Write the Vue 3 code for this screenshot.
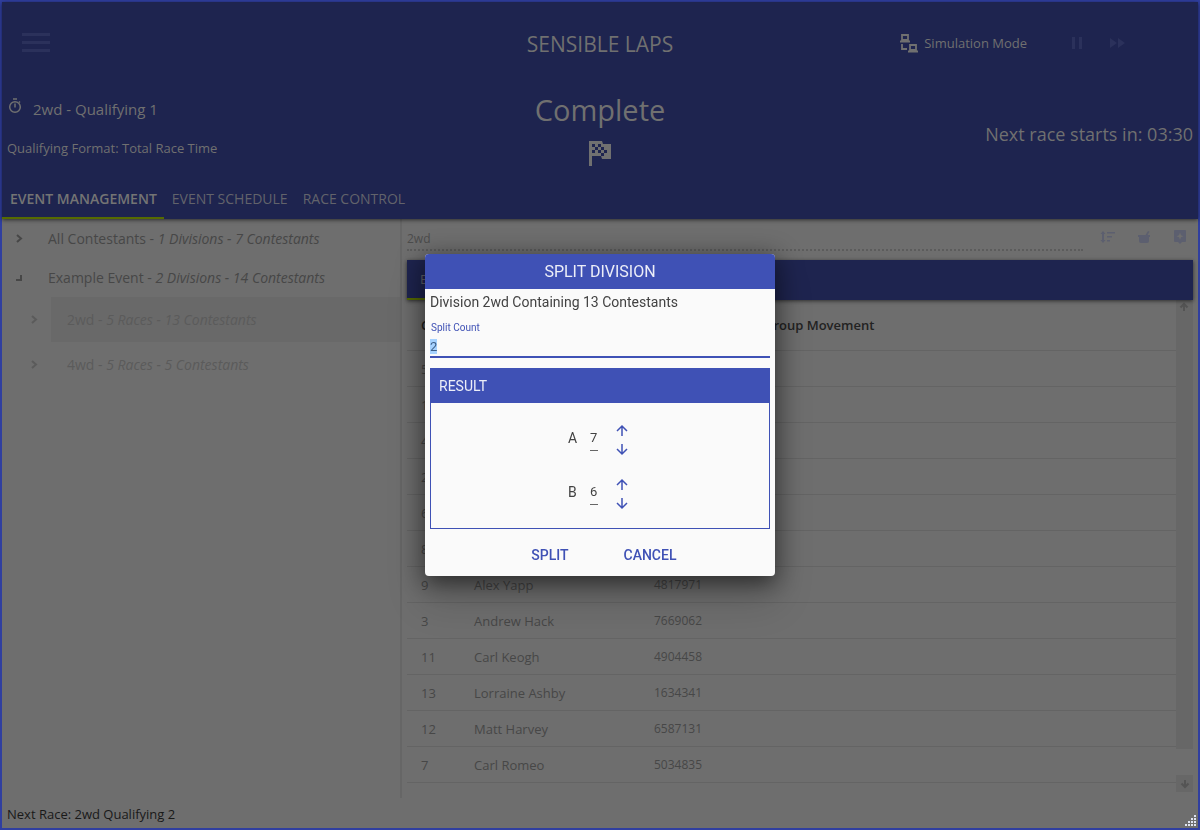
<script setup>
import { onMounted, ref } from 'vue'

const tabs = ['EVENT MANAGEMENT', 'EVENT SCHEDULE', 'RACE CONTROL']

const events = [
  { name: 'All Contestants', detail: '1 Divisions - 7 Contestants', open: false, divisions: [] },
  {
    name: 'Example Event',
    detail: '2 Divisions - 14 Contestants',
    open: true,
    divisions: [
      { name: '2wd', detail: '5 Races - 13 Contestants', selected: true },
      { name: '4wd', detail: '5 Races - 5 Contestants', selected: false },
    ],
  },
]

const entries = [
  { number: 5, name: '', transponder: '' },
  { number: 1, name: '', transponder: '' },
  { number: 4, name: '', transponder: '' },
  { number: 2, name: '', transponder: '' },
  { number: 6, name: '', transponder: '' },
  { number: 8, name: '', transponder: '' },
  { number: 9, name: 'Alex Yapp', transponder: '4817971' },
  { number: 3, name: 'Andrew Hack', transponder: '7669062' },
  { number: 11, name: 'Carl Keogh', transponder: '4904458' },
  { number: 13, name: 'Lorraine Ashby', transponder: '1634341' },
  { number: 12, name: 'Matt Harvey', transponder: '6587131' },
  { number: 7, name: 'Carl Romeo', transponder: '5034835' },
]

const divisionName = ref('2wd')
const splitCount = ref('2')
const groups = ref([
  { name: 'A', size: 7 },
  { name: 'B', size: 6 },
])
const countInput = ref(null)

onMounted(() => {
  countInput.value.focus()
  countInput.value.select()
})
</script>

<template>
  <div class="app">
    <header class="header">
      <div class="topbar">
        <button class="icon-btn menu" aria-label="Menu">
          <svg width="28" height="19" viewBox="0 0 28 19"><path d="M0 0h28v3H0zM0 8h28v3H0zM0 16h28v3H0z" /></svg>
        </button>
        <h1>SENSIBLE LAPS</h1>
        <div class="mode">
          <svg class="mode-icon" width="18" height="19" viewBox="0 0 18 19" fill="none" stroke="currentColor" stroke-width="1.800">
            <path d="M2 1h6v5H2zM0 7.500h10M10 11h6v5h-6zM8 17.500h10M2 10v5h5" />
          </svg>
          <span class="mode-name">Simulation Mode</span>
          <button class="icon-btn pause" aria-label="Pause">
            <svg width="10" height="12" viewBox="0 0 10 12"><path d="M0 0h3v12H0zM7 0h3v12H7z" /></svg>
          </button>
          <button class="icon-btn" aria-label="Fast forward">
            <svg width="15" height="10" viewBox="0 0 15 10"><path d="M0 0l7 5-7 5zM8 0l7 5-7 5z" /></svg>
          </button>
        </div>
      </div>

      <div class="status">
        <div class="race">
          <p class="race-name">
            <svg width="14" height="16" viewBox="0 0 14 16" fill="none" stroke="currentColor" stroke-width="1.500">
              <circle cx="7" cy="9" r="5.300" />
              <path d="M5 1h4M7 5.500v4M11 4.500l1-1" />
            </svg>
            <span>2wd - Qualifying 1</span>
          </p>
          <p class="format">Qualifying Format: Total Race Time</p>
        </div>
        <div class="state">
          <p class="state-name">Complete</p>
          <svg width="22" height="25" viewBox="0 0 22 25">
            <path fill-rule="evenodd" d="M0 0h13l1 3h8v15h-9l-1-3H3v10H0zM3 3v3h3V3zM9 3v3h3V3zM6 6v3h3V6zM12 6v3h3V6zM3 9v3h3V9zM9 9v3h3V9zM15 9v3h3V9zM12 12v3h3v-3z" />
          </svg>
        </div>
        <p class="countdown">Next race starts in: 03:30</p>
      </div>

      <nav class="tabs">
        <button v-for="(tab, i) in tabs" :key="tab" class="tab" :class="{ active: i === 0 }">{{ tab }}</button>
      </nav>
    </header>

    <div class="body">
      <aside class="tree">
        <template v-for="event in events" :key="event.name">
          <div class="event">
            <button class="icon-btn toggle" :aria-label="'Toggle ' + event.name">
              <svg v-if="event.open" width="6" height="6" viewBox="0 0 6 6"><path d="M4 0h2v6H0V4h4z" /></svg>
              <svg v-else width="7" height="9" viewBox="0 0 7 9" fill="none" stroke="currentColor" stroke-width="2"><path d="M1 1l4 3.500L1 8" /></svg>
            </button>
            <span>{{ event.name }} - <em>{{ event.detail }}</em></span>
          </div>
          <div v-for="d in event.divisions" :key="d.name" class="division" :class="{ selected: d.selected }">
            <button class="icon-btn toggle" :aria-label="'Toggle ' + d.name">
              <svg width="7" height="9" viewBox="0 0 7 9" fill="none" stroke="currentColor" stroke-width="2"><path d="M1 1l4 3.500L1 8" /></svg>
            </button>
            <span class="division-name">{{ d.name }} - <em>{{ d.detail }}</em></span>
          </div>
        </template>
      </aside>

      <main class="content">
        <div class="toolbar">
          <input v-model="divisionName" class="division-input" aria-label="Division name" disabled />
          <div class="actions">
            <button class="icon-btn" aria-label="Sort">
              <svg width="14" height="12" viewBox="0 0 14 12"><path d="M2 0l2.500 3H3v6h1.500L2 12-.5 9H1V3H-.5zM6 1h8v1.500H6zM6 5h5v1.500H6zM6 9h3v1.500H6z" /></svg>
            </button>
            <button class="icon-btn" aria-label="Mix">
              <svg width="12" height="12" viewBox="0 0 12 12"><path d="M0 4h7.500L10 0l1.500.8L9.500 4H12v2h-1v4q0 2-2 2H3q-2 0-2-2V6H0z" /></svg>
            </button>
            <button class="icon-btn" aria-label="Add">
              <svg width="12" height="14" viewBox="0 0 12 14"><path fill-rule="evenodd" d="M1 0h10q1 0 1 1v10q0 1-1 1H8l-2 2-2-2H1q-1 0-1-1V1q0-1 1-1zM6 2.500L5 5.200 2.500 6.200 5 7.200l1 2.600 1-2.600 2.500-1L7 5.200z" /></svg>
            </button>
          </div>
        </div>

        <nav class="subtabs">
          <button class="subtab">ENTRANTS</button>
        </nav>

        <div class="grid">
          <table>
            <colgroup><col class="c-number" /><col class="c-name" /><col class="c-transponder" /><col /></colgroup>
            <thead>
              <tr><th>Car</th><th></th><th></th><th>Group Movement</th></tr>
            </thead>
            <tbody>
              <tr v-for="e in entries" :key="e.number">
                <td>{{ e.number }}</td>
                <td>{{ e.name }}</td>
                <td class="transponder">{{ e.transponder }}</td>
                <td></td>
              </tr>
            </tbody>
          </table>
          <div class="scrollbar">
            <div class="thumb">
              <button class="icon-btn" aria-label="Scroll up">
                <svg width="8" height="8" viewBox="0 0 8 8" fill="none" stroke="currentColor" stroke-width="2"><path d="M4 8V1M.5 4.500L4 1l3.500 3.500" /></svg>
              </button>
            </div>
            <button class="icon-btn down" aria-label="Scroll down">
              <svg width="8" height="8" viewBox="0 0 8 8" fill="none" stroke="currentColor" stroke-width="2"><path d="M4 0v7M.5 3.500L4 7l3.500-3.500" /></svg>
            </button>
          </div>
        </div>
      </main>
    </div>

    <footer class="footer">
      <span>Next Race: 2wd Qualifying 2</span>
      <svg class="grip" width="12" height="12" viewBox="0 0 12 12">
        <path d="M9 0h2v2H9zM6 3h2v2H6zM9 3h2v2H9zM3 6h2v2H3zM6 6h2v2H6zM9 6h2v2H9zM0 9h2v2H0zM3 9h2v2H3zM6 9h2v2H6zM9 9h2v2H9z" />
      </svg>
    </footer>

    <div class="overlay">
      <section class="dialog" role="dialog" aria-labelledby="dialog-title">
        <h2 id="dialog-title">SPLIT DIVISION</h2>
        <div class="dialog-body">
          <p class="summary">Division 2wd Containing 13 Contestants</p>
          <label class="count-label" for="split-count">Split Count</label>
          <input id="split-count" ref="countInput" v-model="splitCount" class="count" />
          <div class="result">
            <h3>RESULT</h3>
            <div class="groups">
              <div v-for="g in groups" :key="g.name" class="group">
                <label :for="'group-' + g.name">{{ g.name }}</label>
                <input :id="'group-' + g.name" v-model="g.size" class="size" />
                <div class="steps">
                  <button class="icon-btn" :aria-label="'Increase ' + g.name">
                    <svg width="12" height="11" viewBox="0 0 12 11" fill="none" stroke="currentColor" stroke-width="1.500"><path d="M6 11V1M1 6l5-5 5 5" /></svg>
                  </button>
                  <button class="icon-btn" :aria-label="'Decrease ' + g.name">
                    <svg width="12" height="11" viewBox="0 0 12 11" fill="none" stroke="currentColor" stroke-width="1.500"><path d="M6 0v10M1 5l5 5 5-5" /></svg>
                  </button>
                </div>
              </div>
            </div>
          </div>
        </div>
        <div class="dialog-actions">
          <button>SPLIT</button>
          <button>CANCEL</button>
        </div>
      </section>
    </div>
  </div>
</template>

<style>
body {
  margin: 0;
  background: #6e6e6e;
}
</style>

<style scoped>
.app,
.app * {
  box-sizing: border-box;
}
.app {
  display: flex;
  flex-direction: column;
  min-height: 100vh;
  border: 2px solid #303fa0;
  background: #6e6e6e;
  color: #474747;
  font-family: 'Open Sans', 'Noto Sans', sans-serif;
  font-size: 13px;
  line-height: 20px;
}
h1, h2, h3, p {
  margin: 0;
  font-weight: 400;
}
button, input {
  font: inherit;
  color: inherit;
  background: none;
  border: 0;
  padding: 0;
  margin: 0;
  outline: 0;
  border-radius: 0;
}
.icon-btn {
  display: flex;
  align-items: center;
  justify-content: center;
}
svg {
  display: block;
  flex: none;
  overflow: visible;
}
svg:not([fill]) {
  fill: currentColor;
}

.header {
  position: relative;
  background: #1e244f;
  color: #707070;
  box-shadow: 0 1px 4px rgba(0, 0, 0, 0.6);
}
.topbar {
  display: grid;
  grid-template-columns: 1fr auto 1fr;
  align-items: center;
  height: 82px;
}
.menu {
  justify-self: start;
  margin: 0 0 2px 20px;
  color: #2b315b;
}
h1 {
  padding-top: 2px;
  font-size: 21px;
  line-height: 28px;
}
.mode {
  display: flex;
  align-items: center;
  justify-content: flex-end;
  padding-right: 73px;
}
.mode-name {
  margin-left: 6px;
}
.mode .icon-btn {
  color: #2b315b;
}
.mode .pause {
  margin: 0 28px 0 45px;
}
.status {
  display: grid;
  grid-template-columns: 1fr auto 1fr;
  height: 95px;
}
.race {
  padding: 14px 5px 0 6px;
}
.race-name {
  display: flex;
  align-items: flex-start;
  gap: 11px;
  font-size: 15px;
  line-height: 22px;
}
.format {
  margin: 18px 0 0 -1px;
}
.state {
  display: flex;
  flex-direction: column;
  align-items: center;
  gap: 11px;
  padding-top: 6px;
}
.state-name {
  font-size: 29px;
  line-height: 40px;
}
.countdown {
  justify-self: end;
  align-self: center;
  padding: 5px 5px 0 0;
  font-size: 18px;
  line-height: 26px;
}
.tabs {
  display: flex;
}
.tab {
  height: 40px;
  padding: 2px 7px 0 8px;
  border-bottom: 2px solid transparent;
  color: #62636b;
  font-size: 14px;
}
.tab.active {
  border-color: #566b00;
  color: #747474;
  font-weight: 600;
}

.body {
  display: flex;
  flex: 1;
}
.tree {
  flex: 0 0 400px;
  border-right: 2px solid #666;
  font-size: 14px;
}
.event,
.division {
  display: flex;
  align-items: center;
}
.event {
  height: 39px;
}
.event .toggle {
  width: 34px;
  margin-right: 12px;
}
.division {
  height: 45px;
  padding-left: 16px;
  color: #5b5b5b;
}
.division .toggle {
  width: 33px;
}
.division-name {
  flex: 1;
  padding: 0 16px;
  line-height: 45px;
}
.selected .division-name {
  background: #696969;
}
.content {
  flex: 1;
  min-width: 0;
  padding: 0 5px 6px;
}
.toolbar {
  display: flex;
  align-items: flex-start;
  height: 41px;
}
.division-input {
  flex: 1;
  min-width: 0;
  height: 32px;
  padding-top: 9px;
  border-bottom: 2px dotted #5c5c5c;
  color: #4c4c4c;
  font-size: 12px;
}
.actions {
  display: flex;
  gap: 12px;
  width: 110px;
  height: 36px;
  padding-left: 13px;
  color: #5c5f6f;
}
.actions .icon-btn {
  width: 24px;
}
.subtabs {
  position: relative;
  display: flex;
  height: 40px;
  background: #1e244f;
  box-shadow: 0 1px 4px rgba(0, 0, 0, 0.6);
}
.subtab {
  padding: 0 13px;
  border-bottom: 2px solid #566b00;
  color: #62636b;
}
.grid {
  display: flex;
}
table {
  flex: 1;
  table-layout: fixed;
  border-collapse: separate;
  border-spacing: 0;
}
.c-number { width: 53px; }
.c-name { width: 180px; }
.c-transponder { width: 110px; }
th,
td {
  height: 36px;
  padding: 0 0 0 14px;
  border-bottom: 1px solid #646464;
  text-align: left;
  white-space: nowrap;
}
th {
  height: 51px;
  color: #222;
  font-weight: 600;
}
.transponder {
  font-size: 12px;
}
.scrollbar {
  display: flex;
  flex-direction: column;
  justify-content: space-between;
  width: 17px;
  margin-bottom: -9px;
  color: #545454;
}
.thumb {
  height: 449px;
  padding: 3px 4px;
  background: #676767;
}
.down {
  height: 17px;
  background: #676767;
}
.footer {
  display: flex;
  justify-content: space-between;
  height: 30px;
  padding: 6px 0 0 5px;
  color: #191919;
}
.grip {
  align-self: flex-end;
  margin: 0 1px 1px 0;
  color: #dfe3f0;
}

.overlay {
  position: fixed;
  inset: 0;
  display: flex;
  align-items: center;
  justify-content: center;
  font-family: Roboto, sans-serif;
  font-size: 14px;
}
.dialog {
  width: 350px;
  border-radius: 4px;
  background: #fafafa;
  color: #424242;
  box-shadow: 0 11px 15px -7px rgba(0, 0, 0, 0.2), 0 24px 38px 3px rgba(0, 0, 0, 0.14), 0 5px 24px 4px rgba(0, 0, 0, 0.4);
}
h2 {
  border-radius: 4px 4px 0 0;
  background: #3f51b5;
  color: #eceef8;
  font-size: 16px;
  line-height: 35px;
  text-align: center;
}
.dialog-body {
  padding: 3px 5px 0;
}
.count-label {
  display: block;
  margin-top: 10px;
  padding-left: 1px;
  color: #3f51b5;
  font-size: 10px;
  line-height: 12px;
}
.count {
  display: block;
  width: 100%;
  height: 24px;
  padding-top: 2px;
  border-bottom: 2px solid #3f51b5;
  font-size: 13px;
}
.count::selection {
  background: #a6d2ff;
  color: #3d5f88;
}
.result {
  margin-top: 10px;
  border: 1px solid #3f51b5;
}
h3 {
  padding: 0 8px;
  background: #3f51b5;
  color: #eceef8;
  font-size: 14px;
  line-height: 34px;
}
.groups {
  padding: 8px 0 9px;
}
.group {
  display: flex;
  align-items: center;
  justify-content: center;
  height: 54px;
  padding-right: 4px;
}
.group label {
  width: 10px;
}
.size {
  width: 8px;
  height: 25px;
  margin: 0 18px 0 12px;
  border-bottom: 1px solid #666;
  font-size: 13px;
}
.steps {
  display: flex;
  flex-direction: column;
  gap: 8px;
  padding-top: 3px;
  color: #3f51b5;
}
.dialog-actions {
  display: flex;
  justify-content: center;
  gap: 10px;
  padding: 8px 0 3px;
}
.dialog-actions button {
  width: 90px;
  height: 36px;
  color: #3f51b5;
  font-weight: 500;
}
</style>
